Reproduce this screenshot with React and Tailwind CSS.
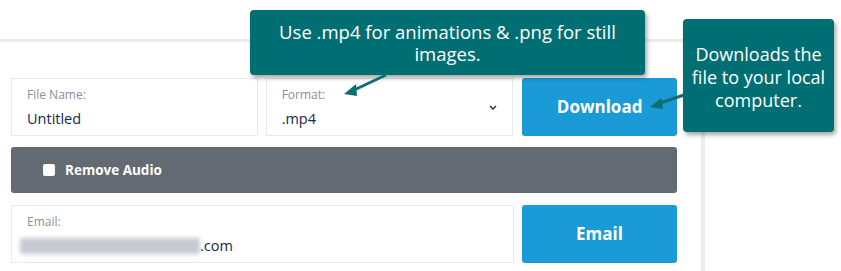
import React from 'react';

const Field = ({ label, children, className }) => (
  <div className={`flex h-[58px] flex-col justify-center border border-[#e9e9e9] bg-white pl-[15px] pt-[3px] ${className}`}>
    <span className="text-[12px] leading-[14px] text-[#8a8f96]">{label}</span>
    <div className="mt-[7px] text-[14.5px] leading-[20px] text-[#14284b]">{children}</div>
  </div>
);

const Callout = ({ className, children }) => (
  <div
    className={`absolute flex items-center justify-center rounded-[4px] bg-[#006f74] text-center text-white shadow-[2px_3px_4px_rgba(0,0,0,0.35)] ${className}`}
  >
    {children}
  </div>
);

export default function App() {
  return (
    <div className="relative h-[271px] w-[841px] overflow-hidden bg-white font-['Open_Sans',sans-serif]">
      {/* main panel */}
      <div className="mt-[39px] h-[240px] w-[705px] border-t-[3px] border-r-[4px] border-[#ececec] pl-[11px] pr-[24px] pt-[36px]">
        <div className="flex gap-[8px]">
          <Field label="File Name:" className="w-[247px]">
            Untitled
          </Field>
          <div className="relative w-[248px]">
            <Field label="Format:" className="w-full">
              .mp4
            </Field>
            <svg className="absolute right-[16px] top-[27px]" width="8" height="5" viewBox="0 0 8 5">
              <path d="M1 1l3 3 3-3" fill="none" stroke="#14284b" strokeWidth="1.4" />
            </svg>
          </div>
          <button className="ml-[1px] h-[58px] w-[155px] rounded-[3px] bg-[#1a9ad6] text-[17px] font-bold text-white">
            Download
          </button>
        </div>

        <div className="mt-[11px] flex h-[46px] items-center rounded-[3px] bg-[#636a71] pl-[32px]">
          <span className="h-[12px] w-[12px] rounded-[2px] bg-white" />
          <span className="ml-[10px] text-[13.5px] font-bold text-white">Remove Audio</span>
        </div>

        <div className="mt-[12px] flex gap-[8px]">
          <Field label="Email:" className="w-[503px]">
            <div className="flex items-center">
              <span className="ml-[-7px] h-[16px] w-[180px] rounded-[2px] bg-[#c5c9d1] blur-[2px]" />
              <span>.com</span>
            </div>
          </Field>
          <button className="h-[58px] w-[155px] rounded-[3px] bg-[#1a9ad6] text-[17px] font-bold text-white">
            Email
          </button>
        </div>
      </div>

      {/* tooltips */}
      <Callout className="left-[250px] top-[10px] h-[65px] w-[395px] px-[8px] text-[18.5px] leading-[22px]">
        Use .mp4 for animations &amp; .png for still
        <br />
        images.
      </Callout>
      <Callout className="left-[683px] top-[19px] h-[113px] w-[151px] pt-[3px] text-[18px] leading-[23px]">
        Downloads the
        <br />
        file to your local
        <br />
        computer.
      </Callout>

      <svg className="absolute left-0 top-0" width="841" height="271" viewBox="0 0 841 271">
        <path d="M386 75 L352 91" stroke="#0e6e72" strokeWidth="3" />
        <path d="M344 94 L356 84 L357 96 Z" fill="#0e6e72" />
        <path d="M684 95 L657 104" stroke="#0e6e72" strokeWidth="3" />
        <path d="M650 107 L661 98 L663 109 Z" fill="#0e6e72" />
      </svg>
    </div>
  );
}
